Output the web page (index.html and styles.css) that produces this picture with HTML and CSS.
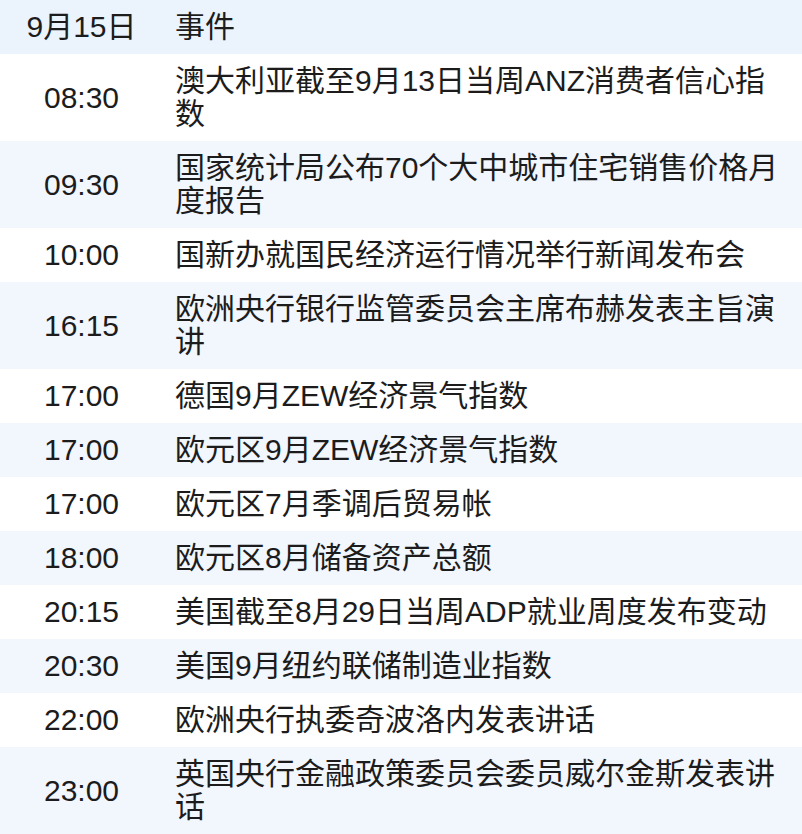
FILE: index.html
```html
<!DOCTYPE html>
<html lang="zh-CN">
<head>
<meta charset="utf-8">
<title>9月15日 事件</title>
<link rel="stylesheet" href="styles.css">
</head>
<body>
<table class="cal">
  <thead>
    <tr class="head"><th class="time">9月15日</th><th class="event">事件</th></tr>
  </thead>
  <tbody>
    <tr><td class="time">08:30</td><td class="event">澳大利亚截至9月13日当周ANZ消费者信心指数</td></tr>
    <tr><td class="time">09:30</td><td class="event">国家统计局公布70个大中城市住宅销售价格月度报告</td></tr>
    <tr><td class="time">10:00</td><td class="event">国新办就国民经济运行情况举行新闻发布会</td></tr>
    <tr><td class="time">16:15</td><td class="event">欧洲央行银行监管委员会主席布赫发表主旨演讲</td></tr>
    <tr><td class="time">17:00</td><td class="event">德国9月ZEW经济景气指数</td></tr>
    <tr><td class="time">17:00</td><td class="event">欧元区9月ZEW经济景气指数</td></tr>
    <tr><td class="time">17:00</td><td class="event">欧元区7月季调后贸易帐</td></tr>
    <tr><td class="time">18:00</td><td class="event">欧元区8月储备资产总额</td></tr>
    <tr><td class="time">20:15</td><td class="event">美国截至8月29日当周ADP就业周度发布变动</td></tr>
    <tr><td class="time">20:30</td><td class="event">美国9月纽约联储制造业指数</td></tr>
    <tr><td class="time">22:00</td><td class="event">欧洲央行执委奇波洛内发表讲话</td></tr>
    <tr><td class="time">23:00</td><td class="event">英国央行金融政策委员会委员威尔金斯发表讲话</td></tr>
  </tbody>
</table>
</body>
</html>
```
FILE: styles.css
```css
html, body {
  margin: 0;
  padding: 0;
  background: #ffffff;
}
.cal {
  width: 802px;
  border-collapse: collapse;
  table-layout: fixed;
  font-family: "Liberation Sans", "Noto Sans CJK SC", sans-serif;
  font-size: 30px;
  line-height: 33px;
  color: #1c1c1c;
}
.cal th, .cal td {
  padding: 10px 0 11px 0;
  font-weight: normal;
  vertical-align: middle;
}
.cal .time {
  width: 163px;
  text-align: center;
}
.cal .event {
  text-align: left;
  padding-left: 12px;
  padding-right: 14px;
}
.cal .head {
  background: #ebf3fc;
}
.cal tbody tr:nth-child(even) {
  background: #f2f6fd;
}
```
